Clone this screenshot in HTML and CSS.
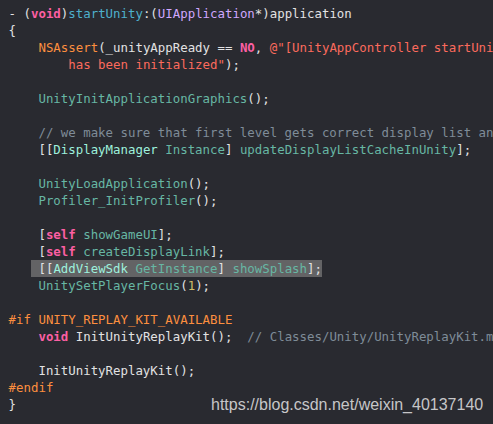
FILE: index.html
```html
<!DOCTYPE html>
<html>
<head>
<meta charset="utf-8">
<link rel="stylesheet" href="styles.css">
</head>
<body>
<div class="editor">
<div class="ln">- (<span class="kw">void</span>)<span class="decl">startUnity</span>:(<span class="cls">UIApplication</span>*)application</div>
<div class="ln">{</div>
<div class="ln">    <span class="mac">NSAssert</span>(_unityAppReady == <span class="kw">NO</span>, <span class="str">@"[UnityAppController startUnit</span></div>
<div class="ln">        <span class="str">has been initialized"</span>);</div>
<div class="ln"> </div>
<div class="ln">    <span class="fn">UnityInitApplicationGraphics</span>();</div>
<div class="ln"> </div>
<div class="ln">    <span class="cm">// we make sure that first level gets correct display list and</span></div>
<div class="ln">    [[<span class="pcls">DisplayManager</span> <span class="fn">Instance</span>] <span class="fn">updateDisplayListCacheInUnity</span>];</div>
<div class="ln"> </div>
<div class="ln">    <span class="fn">UnityLoadApplication</span>();</div>
<div class="ln">    <span class="fn">Profiler_InitProfiler</span>();</div>
<div class="ln"> </div>
<div class="ln">    [<span class="kw">self</span> <span class="fn">showGameUI</span>];</div>
<div class="ln">    [<span class="kw">self</span> <span class="fn">createDisplayLink</span>];</div>
<div class="ln">   <span class="sel"> [[<span class="pcls">AddViewSdk</span> <span class="fn">GetInstance</span>] <span class="fn">showSplash</span>];</span></div>
<div class="ln">    <span class="fn">UnitySetPlayerFocus</span>(<span class="num">1</span>);</div>
<div class="ln"> </div>
<div class="ln"><span class="pp">#if UNITY_REPLAY_KIT_AVAILABLE</span></div>
<div class="ln">    <span class="kw">void</span> InitUnityReplayKit();  <span class="cm">// Classes/Unity/UnityReplayKit.mm</span></div>
<div class="ln"> </div>
<div class="ln">    InitUnityReplayKit();</div>
<div class="ln"><span class="pp">#endif</span></div>
<div class="ln">}</div>
</div>
<div class="watermark">https://blog.csdn.net/weixin_40137140</div>
</body>
</html>
```
FILE: styles.css
```css
html, body {
  margin: 0;
  padding: 0;
  background: #292a30;
  width: 493px;
  height: 424px;
  overflow: hidden;
}
body {
  position: relative;
}
.editor {
  padding: 5px 0 0 8.6px;
  font-family: "DejaVu Sans Mono", "Liberation Mono", monospace;
  font-size: 12.4px;
  color: #e2e2e3;
}
.ln {
  height: 17px;
  line-height: 17px;
  white-space: pre;
}
.kw { color: #fc5fa3; font-weight: bold; }
.decl { color: #4eb0cc; }
.cls { color: #d0a8ff; }
.mac { color: #fd8f3f; }
.pp { color: #fd8f3f; }
.str { color: #fc6a5d; }
.fn { color: #67b7a4; }
.pcls { color: #9ef1dd; }
.cm { color: #7f8c98; }
.num { color: #d0bf69; }
.sel {
  display: inline-block;
  height: 17px;
  background: #636365;
}
.watermark {
  position: absolute;
  left: 211px;
  top: 397px;
  font-family: "Liberation Sans", Arial, sans-serif;
  font-size: 16px;
  line-height: 16px;
  color: #c6c6c8;
  white-space: nowrap;
}
```
